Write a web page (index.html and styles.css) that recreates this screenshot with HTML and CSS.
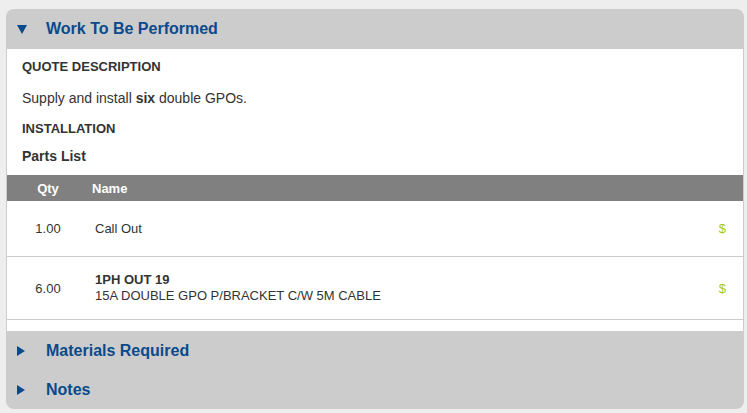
FILE: index.html
```html
<!DOCTYPE html>
<html>
<head>
<meta charset="utf-8">
<link rel="stylesheet" href="styles.css">
</head>
<body>
<div class="panel">
  <div class="section-head">
    <svg class="tri" width="10" height="9" viewBox="0 0 10 9"><path d="M0 0H10L5 9Z" fill="#0a4a8c"/></svg>
    <span class="section-title">Work To Be Performed</span>
  </div>
  <div class="section-body">
    <div class="label">QUOTE DESCRIPTION</div>
    <p class="desc">Supply and install <b>six</b> double GPOs.</p>
    <div class="label label-install">INSTALLATION</div>
    <div class="sub">Parts List</div>
    <table class="parts">
      <thead>
        <tr><th class="c-qty">Qty</th><th class="c-name">Name</th><th class="c-price"></th></tr>
      </thead>
      <tbody>
        <tr class="r1"><td class="c-qty">1.00</td><td class="c-name">Call Out</td><td class="c-price">$</td></tr>
        <tr class="r2"><td class="c-qty">6.00</td><td class="c-name"><b>1PH OUT 19</b><br>15A DOUBLE GPO P/BRACKET C/W 5M CABLE</td><td class="c-price">$</td></tr>
      </tbody>
    </table>
  </div>
  <div class="section-head closed">
    <svg class="tri" width="8" height="10" viewBox="0 0 8 10"><path d="M0 0L8 5L0 10Z" fill="#0a4a8c"/></svg>
    <span class="section-title">Materials Required</span>
  </div>
  <div class="section-head closed last">
    <svg class="tri" width="8" height="10" viewBox="0 0 8 10"><path d="M0 0L8 5L0 10Z" fill="#0a4a8c"/></svg>
    <span class="section-title">Notes</span>
  </div>
</div>
</body>
</html>
```

FILE: styles.css
```css
html, body {
  margin: 0;
  padding: 0;
  background: #eeeeee;
  font-family: "Liberation Sans", Arial, sans-serif;
  color: #333333;
}
.panel {
  margin: 9px 3px 0 6px;
  width: 738px;
  background: #cccccc;
  border-radius: 8px;
  padding: 0 1px;
  box-sizing: border-box;
  overflow: hidden;
}
.section-head {
  height: 40px;
  display: flex;
  align-items: center;
}
.section-head.closed { height: 39px; }
.section-head.last { height: 39px; }
.tri {
  margin-left: 10px;
  flex: none;
}
.section-title {
  font-size: 16px;
  font-weight: bold;
  color: #0a4a8c;
  margin-left: 19px;
}
.section-head.closed .section-title { margin-left: 21px; }
.section-body {
  background: #ffffff;
  padding-top: 10px;
  padding-bottom: 11px;
}
.label {
  font-size: 13px;
  font-weight: bold;
  line-height: 16px;
  padding-left: 15px;
}
.desc {
  margin: 15px 0 0;
  font-size: 14px;
  line-height: 16px;
  padding-left: 15px;
}
.label-install { margin-top: 15px; }
.sub {
  margin-top: 11px;
  font-size: 14px;
  font-weight: bold;
  line-height: 16px;
  padding-left: 15px;
}
.parts {
  margin-top: 11px;
  width: 100%;
  border-collapse: collapse;
  font-size: 13px;
}
.parts th {
  background: #808080;
  color: #ffffff;
  font-weight: bold;
  height: 26px;
  padding: 0;
  text-align: left;
}
.parts th.c-qty { text-align: center; width: 82px; }
.parts th.c-name { padding-left: 3px; }
.parts td {
  border-bottom: 1px solid #cccccc;
  padding: 0;
  vertical-align: middle;
}
.parts td.c-qty { text-align: center; }
.parts td.c-name { padding-left: 6px; line-height: 16px; }
.parts td.c-price {
  text-align: right;
  padding-right: 17px;
  color: #a8c81e;
}
.r1 td { height: 55px; }
.r2 td { height: 62px; }
```
